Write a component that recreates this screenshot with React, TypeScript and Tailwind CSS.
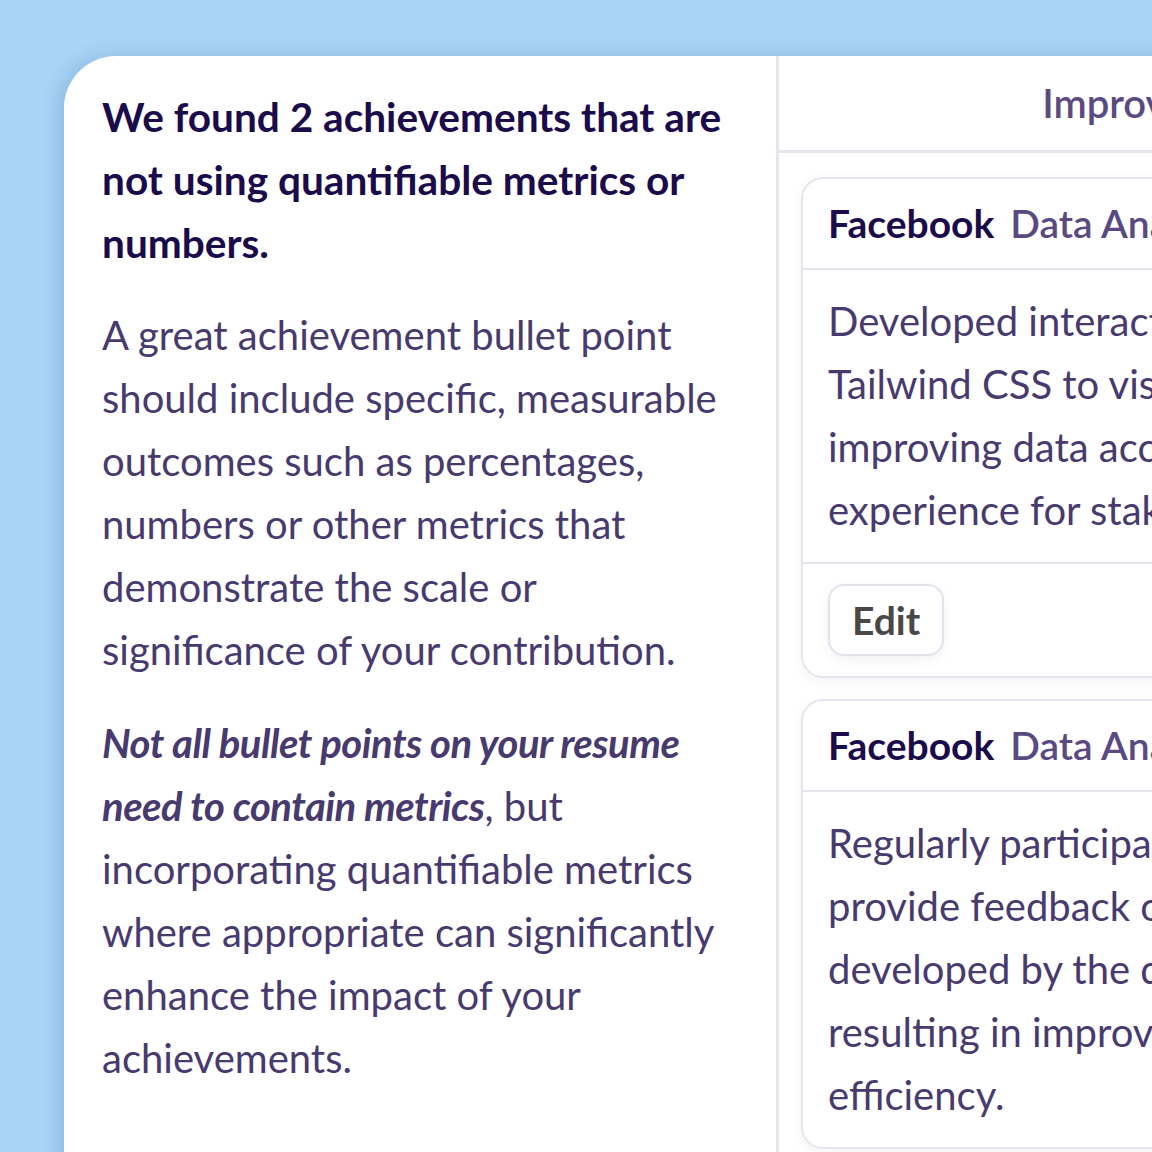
import React from 'react';

const cards = [
  {
    company: 'Facebook',
    role: 'Data Analyst Intern',
    lines: [
      'Developed interactive dashboards using React and',
      'Tailwind CSS to visualize key business metrics,',
      'improving data accessibility and the overall user',
      'experience for stakeholders.',
    ],
    edit: true,
  },
  {
    company: 'Facebook',
    role: 'Data Analyst Intern',
    lines: [
      'Regularly participated in user testing sessions to',
      'provide feedback on new features and tools',
      'developed by the data engineering team,',
      'resulting in improved product quality and',
      'efficiency.',
    ],
    edit: false,
  },
];

const AchievementCard = ({ card }: { card: (typeof cards)[number] }) => (
  <div className="rounded-[22px] border-2 border-[#e6e5ee] bg-white shadow-[0_4px_14px_rgba(40,30,90,0.05)]">
    <div className="flex items-center gap-4 border-b-2 border-[#e6e5ee] px-[25px] h-[91px]">
      <span className="text-[39px] font-bold text-[#1b0b4b] whitespace-nowrap">{card.company}</span>
      <span className="text-[39px] font-semibold text-[#5b4a82] whitespace-nowrap">{card.role}</span>
    </div>
    <div className="px-[25px] py-[20px] text-[40px] leading-[63px] text-[#483a6e] whitespace-nowrap">
      {card.lines.map((l, i) => (
        <div key={i}>{l}</div>
      ))}
    </div>
    {card.edit && (
      <div className="border-t-2 border-[#e6e5ee] px-[25px] py-[20px]">
        <button className="h-[72px] rounded-[16px] border-2 border-[#e3e2ec] bg-white px-[22px] text-[39px] font-bold text-[#484848] shadow-[0_4px_12px_rgba(40,30,90,0.06)]">
          Edit
        </button>
      </div>
    )}
  </div>
);

export default function App() {
  return (
    <div className="w-[1152px] h-[1152px] overflow-hidden bg-[#a8d4f6] pt-[56px] pl-[64px] font-['Lato',sans-serif]">
      <div className="flex w-[1500px] h-[1200px] rounded-tl-[52px] bg-white shadow-[-6px_0_18px_rgba(40,80,140,0.18)]">
        {/* explanation */}
        <div className="w-[715px] shrink-0 border-r-[3px] border-[#e6e5ee] pl-[38px] pr-[10px] pt-[29px]">
          <h2 className="text-[40.6px] font-bold leading-[63px] text-[#1b0b4b] whitespace-nowrap">
            We found 2 achievements that are
            <br />
            not using quantifiable metrics or
            <br />
            numbers.
          </h2>
          <p className="mt-[30px] text-[40px] leading-[63px] text-[#483a6e] whitespace-nowrap">
            A great achievement bullet point
            <br />
            should include specific, measurable
            <br />
            outcomes such as percentages,
            <br />
            numbers or other metrics that
            <br />
            demonstrate the scale or
            <br />
            significance of your contribution.
          </p>
          <p className="mt-[30px] text-[40px] leading-[63px] text-[#483a6e] whitespace-nowrap">
            <span className="font-bold italic tracking-[-0.5px]">
              Not all bullet points on your resume
              <br />
              need to contain metrics
            </span>
            , but
            <br />
            incorporating quantifiable metrics
            <br />
            where appropriate can significantly
            <br />
            enhance the impact of your
            <br />
            achievements.
          </p>
        </div>

        {/* improvements */}
        <div className="w-[780px] shrink-0">
          <div className="flex h-[97px] items-center justify-center border-b-[3px] border-[#e6e5ee]">
            <span className="text-[40px] font-semibold text-[#5b4a82]">Improvements</span>
          </div>
          <div className="flex flex-col gap-[21px] pl-[22px] pt-[24px]">
            {cards.map((c, i) => (
              <AchievementCard key={i} card={c} />
            ))}
          </div>
        </div>
      </div>
    </div>
  );
}
